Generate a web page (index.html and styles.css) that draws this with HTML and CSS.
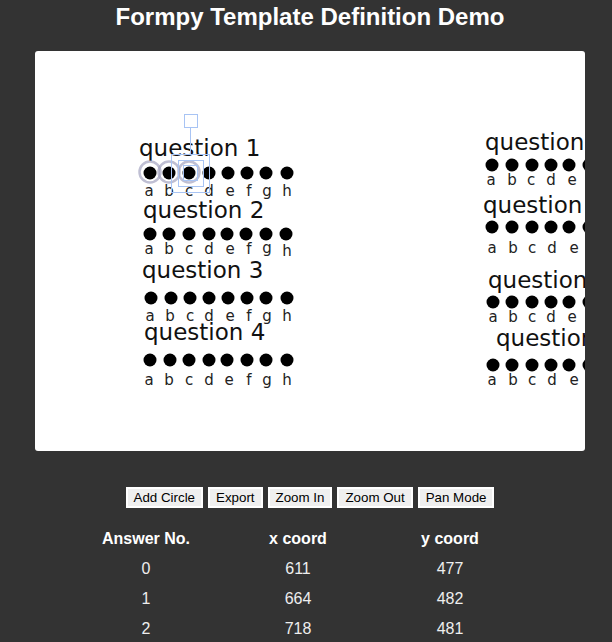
FILE: index.html
```html
<!DOCTYPE html>
<html lang="en">

<head>
    <meta charset="UTF-8">
    <meta name="viewport" content="width=device-width, initial-scale=1.0">
    <title>Formpy Template Definition Demo</title>
    <link rel="stylesheet" href="styles.css">
</head>

<body>

    <div class="page">
        <h1>Formpy Template Definition Demo</h1>

        <div class="stage">
            <svg class="form" viewBox="35 51 550 400" width="550" height="400">
                <!-- left copy of the form -->
                <g class="label">
                    <text x="139" y="156">question 1</text>
                    <text x="143" y="218">question 2</text>
                    <text x="142" y="278">question 3</text>
                    <text x="144" y="340">question 4</text>
                </g>
                <g class="dots">
                    <circle cx="150" cy="173" r="6.5"/><circle cx="169" cy="173" r="6.5"/><circle cx="189" cy="173" r="6.5"/><circle cx="209" cy="173" r="6.5"/>
                    <circle cx="228" cy="173" r="6.5"/><circle cx="247" cy="173" r="6.5"/><circle cx="266" cy="173" r="6.5"/><circle cx="287" cy="173" r="6.5"/>
                    <circle cx="150" cy="234" r="6.5"/><circle cx="169" cy="234" r="6.5"/><circle cx="189" cy="234" r="6.5"/><circle cx="209" cy="234" r="6.5"/>
                    <circle cx="227" cy="234" r="6.5"/><circle cx="246" cy="234" r="6.5"/><circle cx="266" cy="234" r="6.5"/><circle cx="286" cy="234" r="6.5"/>
                    <circle cx="151" cy="298" r="6.5"/><circle cx="171" cy="298" r="6.5"/><circle cx="190" cy="298" r="6.5"/><circle cx="209" cy="298" r="6.5"/>
                    <circle cx="228" cy="298" r="6.5"/><circle cx="247" cy="298" r="6.5"/><circle cx="266" cy="298" r="6.5"/><circle cx="287" cy="298" r="6.5"/>
                    <circle cx="150" cy="360" r="6.5"/><circle cx="170" cy="360" r="6.5"/><circle cx="189" cy="360" r="6.5"/><circle cx="209" cy="360" r="6.5"/>
                    <circle cx="227" cy="360" r="6.5"/><circle cx="247" cy="360" r="6.5"/><circle cx="266" cy="360" r="6.5"/><circle cx="287" cy="360" r="6.5"/>
                </g>
                <g class="letters">
                    <text y="196"><tspan x="149">a</tspan><tspan x="169">b</tspan><tspan x="189">c</tspan><tspan x="209">d</tspan><tspan x="230">e</tspan><tspan x="249">f</tspan><tspan x="267">g</tspan><tspan x="287">h</tspan></text>
                    <text y="254"><tspan x="149">a</tspan><tspan x="169">b</tspan><tspan x="189">c</tspan><tspan x="209">d</tspan><tspan x="230">e</tspan><tspan x="249">f</tspan><tspan x="267" dy="-1">g</tspan><tspan x="287" dy="3">h</tspan></text>
                    <text y="321"><tspan x="150">a</tspan><tspan x="170">b</tspan><tspan x="190">c</tspan><tspan x="209">d</tspan><tspan x="230">e</tspan><tspan x="249">f</tspan><tspan x="267">g</tspan><tspan x="287">h</tspan></text>
                    <text y="385"><tspan x="149">a</tspan><tspan x="169">b</tspan><tspan x="189">c</tspan><tspan x="209">d</tspan><tspan x="229">e</tspan><tspan x="249">f</tspan><tspan x="267">g</tspan><tspan x="287">h</tspan></text>
                </g>

                <!-- right copy, cut off by the stage edge -->
                <g class="label">
                    <text x="485" y="150">question 1</text>
                    <text x="483" y="213">question 2</text>
                    <text x="488" y="288">question 3</text>
                    <text x="496" y="346">question 4</text>
                </g>
                <g class="dots">
                    <circle cx="492" cy="165" r="6.5"/><circle cx="512" cy="165" r="6.5"/><circle cx="532" cy="165" r="6.5"/><circle cx="551" cy="165" r="6.5"/><circle cx="569" cy="165" r="6.5"/><circle cx="589" cy="165" r="6.5"/>
                    <circle cx="492" cy="227" r="6.5"/><circle cx="512" cy="227" r="6.5"/><circle cx="532" cy="227" r="6.5"/><circle cx="551" cy="227" r="6.5"/><circle cx="569" cy="227" r="6.5"/><circle cx="589" cy="227" r="6.5"/>
                    <circle cx="493" cy="302" r="6.5"/><circle cx="512" cy="302" r="6.5"/><circle cx="532" cy="302" r="6.5"/><circle cx="551" cy="302" r="6.5"/><circle cx="569" cy="302" r="6.5"/><circle cx="589" cy="302" r="6.5"/>
                    <circle cx="493" cy="365" r="6.5"/><circle cx="512" cy="365" r="6.5"/><circle cx="532" cy="365" r="6.5"/><circle cx="551" cy="365" r="6.5"/><circle cx="569" cy="365" r="6.5"/><circle cx="589" cy="365" r="6.5"/>
                </g>
                <g class="letters">
                    <text y="185"><tspan x="491">a</tspan><tspan x="512">b</tspan><tspan x="531">c</tspan><tspan x="551">d</tspan><tspan x="572">e</tspan></text>
                    <text y="253"><tspan x="492">a</tspan><tspan x="513">b</tspan><tspan x="532">c</tspan><tspan x="552">d</tspan><tspan x="574">e</tspan></text>
                    <text y="322"><tspan x="493">a</tspan><tspan x="513">b</tspan><tspan x="532">c</tspan><tspan x="551">d</tspan><tspan x="572">e</tspan></text>
                    <text y="385"><tspan x="492">a</tspan><tspan x="513">b</tspan><tspan x="532">c</tspan><tspan x="552">d</tspan><tspan x="574">e</tspan></text>
                </g>

                <!-- answer circles and the selection box -->
                <g class="rings">
                    <circle cx="150" cy="172" r="10.5"/>
                    <circle cx="169" cy="172" r="10.5"/>
                    <circle cx="189" cy="172" r="10.5"/>
                </g>
                <g class="select">
                    <rect x="184.5" y="114.5" width="13" height="13"/>
                    <line x1="190.5" y1="127.5" x2="190.5" y2="154.5"/>
                    <rect x="171.5" y="154.5" width="38" height="38"/>
                    <rect x="178.5" y="160.5" width="25" height="26"/>
                    <rect x="183.5" y="165.5" width="14" height="15"/>
                </g>
            </svg>
        </div>

        <div class="toolbar">
            <button>Add Circle</button>
            <button>Export</button>
            <button>Zoom In</button>
            <button>Zoom Out</button>
            <button>Pan Mode</button>
        </div>

        <table class="answers">
            <tr><th>Answer No.</th><th>x coord</th><th>y coord</th></tr>
            <tr><td>0</td><td>611</td><td>477</td></tr>
            <tr><td>1</td><td>664</td><td>482</td></tr>
            <tr><td>2</td><td>718</td><td>481</td></tr>
        </table>
    </div>

</body>

</html>
```

FILE: styles.css
```css
body {
    margin: 0;
    background: #333333;
    color: #ffffff;
    font-family: "Liberation Sans", Arial, sans-serif;
}

.page {
    width: 550px;
    margin-left: 35px;
}

h1 {
    margin: 3px 0 20px;
    font-size: 24px;
    line-height: 28px;
    text-align: center;
}

.stage {
    height: 400px;
    background: #ffffff;
    border-radius: 3px;
    overflow: hidden;
}

.form {
    display: block;
}

.label text {
    font-family: "DejaVu Sans", sans-serif;
    font-size: 23px;
    fill: #111111;
}

.letters text {
    font-family: "DejaVu Sans", sans-serif;
    font-size: 15px;
    fill: #222222;
    text-anchor: middle;
}

.dots circle {
    fill: #000000;
}

.rings circle {
    fill: none;
    stroke: #a4a4c0;
    stroke-opacity: 0.7;
    stroke-width: 2.5;
}

.select rect,
.select line {
    fill: none;
    stroke: #a8c4f4;
    stroke-width: 1;
}

.toolbar {
    display: flex;
    justify-content: center;
    gap: 5px;
    margin-top: 36px;
}

.toolbar button {
    padding: 1px 6px;
    background: #efefef;
    color: #000000;
    border: 2px solid #ffffff;
    border-radius: 0;
    font-family: "Liberation Sans", Arial, sans-serif;
    font-size: 13.33px;
    line-height: 15px;
}

.answers {
    width: 456px;
    margin: 16px 0 0 35px;
    border-collapse: collapse;
    table-layout: fixed;
    font-size: 16px;
}

.answers th,
.answers td {
    height: 30px;
    padding: 0;
    text-align: center;
    line-height: 30px;
}

.answers td {
    color: #eeeeee;
}
```
